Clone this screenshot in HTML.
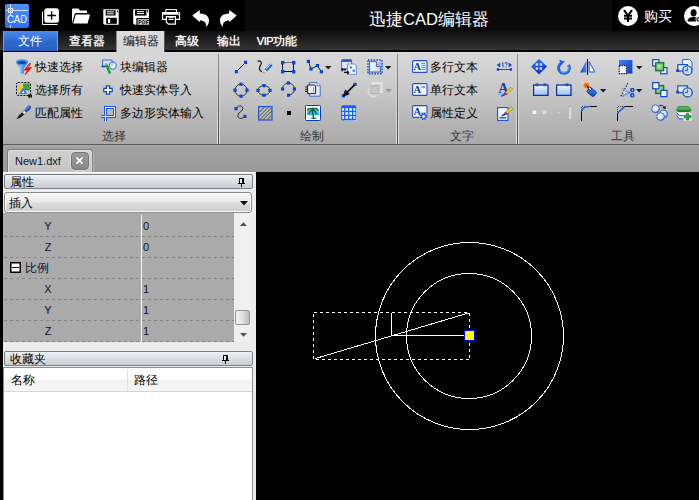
<!DOCTYPE html>
<html lang="zh">
<head>
<meta charset="utf-8">
<title>CAD</title>
<style>
*{box-sizing:border-box;margin:0;padding:0}
html,body{width:699px;height:500px;overflow:hidden;background:#000;font-family:"Liberation Sans",sans-serif;}
#app{position:absolute;left:0;top:0;width:699px;height:500px;overflow:hidden;background:#000}
.abs{position:absolute}
/* title bar */
#title{position:absolute;left:0;top:0;width:699px;height:31px;background:#0a0a0a}
#qa{position:absolute;left:0;top:0;width:245px;height:31px;background:#000}
#buy{position:absolute;left:612px;top:0;width:87px;height:31px;background:#000}
#ttl{position:absolute;left:369px;top:9px;width:120px;height:20px;color:#fff;font-size:16.5px;line-height:20px;white-space:nowrap}
/* tab row */
#tabs{position:absolute;left:0;top:31px;width:699px;height:21px;background:linear-gradient(#0e0e0e,#343434);border-bottom:2px solid #000}
.tab{position:absolute;top:0;height:20px;color:#fff;font-size:12px;line-height:20px;text-align:center;white-space:nowrap}
.tsh{text-shadow:0 0 1px #fff}
/* ribbon */
#ribbon{position:absolute;left:0;top:52px;width:699px;height:93px;background:linear-gradient(#d8d8d8 0,#cecece 30%,#a9a9a9 100%);border-bottom:1px solid #5a5a5a}
.rt{position:absolute;margin-left:-1px;font-size:12px;line-height:14px;color:#000;white-space:nowrap}
.gl{position:absolute;font-size:12px;line-height:14px;color:#333;white-space:nowrap}
.sep{position:absolute;top:2px;width:3px;height:90px;background:linear-gradient(rgba(255,255,255,0),rgba(255,255,255,.15) 40%,rgba(255,255,255,.7));}
.sep:after{content:"";position:absolute;left:1px;top:0;width:1px;height:90px;background:linear-gradient(#8e8e8e,#4c4c4c)}
.ic{position:absolute;width:16px;height:16px;overflow:visible}
/* doc tabs */
#doctabs{position:absolute;left:0;top:145px;width:699px;height:27px;background:linear-gradient(#b0b0b0 0,#a2a2a2 2px,#9a9a9a)}
/* left panel */
#left{position:absolute;left:0;top:172px;width:256px;height:328px;background:#ececec;border-left:3px solid #000}
.phead{position:absolute;left:1px;width:249px;height:15px;border:1px solid #7c8088;border-radius:2px;background:linear-gradient(#eef0f4,#c9ccd3);font-size:12px;line-height:15px;color:#000;padding-left:5px}
.pg{margin-top:1px;font-size:11px;line-height:14px;color:#10102a;white-space:nowrap}
#canvas{position:absolute;left:256px;top:172px;width:443px;height:328px;background:#000}
</style>
</head>
<body>
<div id="app">
<div id="title"></div>
<div id="qa"></div>
<div id="buy"></div>
<!-- logo -->
<div class="abs" style="left:5px;top:4px;width:24px;height:24px;border-radius:2px;background:linear-gradient(#4f8ffb,#2f6ff0);overflow:hidden">
<svg class="abs" style="left:0;top:0" width="24" height="24" viewBox="0 0 24 24">
<path d="M5.5 0V11M5.5 21V24M1 6.5H23" stroke="#cfe0ff" stroke-width="1" fill="none"/>
<rect x="3.5" y="4.5" width="4" height="4" fill="none" stroke="#dfeaff" stroke-width="1"/>
<text x="12" y="19" font-family="Liberation Sans, sans-serif" font-size="10.5" fill="#fff" text-anchor="middle" textLength="20" lengthAdjust="spacingAndGlyphs">CAD</text>
</svg></div>
<!-- new -->
<svg class="abs" style="left:41px;top:7px" width="20" height="20" viewBox="0 0 20 20">
<path d="M1.5 4.5V17.5H16.5" stroke="#fff" stroke-width="1" fill="none"/>
<rect x="3.3" y="1.3" width="14.6" height="14.4" rx="2.5" fill="#fff"/>
<path d="M10.6 4.2V12.8M6.3 8.5H14.9" stroke="#000" stroke-width="1.3" fill="none"/>
</svg>
<!-- open -->
<svg class="abs" style="left:71px;top:7px" width="20" height="20" viewBox="0 0 20 20">
<path d="M1 16.5V2.5Q1 1.5 2 1.5H7.5L9 3.5H16V6H5.2Q4 6 3.6 7.2Z" fill="#fff"/>
<path d="M4.8 7.4H19L16.6 16.6H2.2Z" fill="#fff"/>
</svg>
<!-- save -->
<svg class="abs" style="left:103px;top:9px" width="16" height="16" viewBox="0 0 16 16">
<path d="M0.3 0.3H15.7V15.7H1.8L0.3 14.2Z" fill="#fff"/>
<rect x="2.6" y="1.2" width="10" height="5.3" fill="#000"/>
<rect x="3.8" y="2.3" width="7" height="1" fill="#fff"/><rect x="3.8" y="4.3" width="7" height="1" fill="#fff"/>
<rect x="14" y="1.3" width="0.9" height="2" fill="#000"/>
<rect x="3.2" y="8.8" width="10.6" height="6" fill="#000"/>
<rect x="5" y="10" width="2.2" height="4" fill="#fff"/>
</svg>
<!-- save pdf -->
<svg class="abs" style="left:133px;top:9px" width="16" height="16" viewBox="0 0 16 16">
<path d="M0.2 0.2H15.9V15.8H1.8L0.2 14.2Z" fill="#fff"/>
<rect x="2" y="1" width="11.4" height="5.6" fill="#000"/>
<rect x="4" y="2.2" width="7" height="1" fill="#fff"/><rect x="4" y="4.1" width="7" height="1" fill="#fff"/>
<rect x="14.2" y="0.9" width="0.9" height="2.3" fill="#000"/>
<rect x="3.4" y="9" width="12.6" height="7" fill="#000"/>
<rect x="4.6" y="10.2" width="11.4" height="5.6" fill="#d4d4d4"/>
<g transform="translate(5.6 11)" stroke="#222" stroke-width="1" fill="none"><path d="M0.5 4.4V0.5H1.6Q2.7 0.5 2.7 1.5Q2.7 2.5 1.6 2.5H0.5"/><path d="M4.1 0.5V4H5Q6.5 4 6.5 2.25Q6.5 0.5 5 0.5Z"/><path d="M8.1 4.4V0.5H10.2M8.1 2.4H9.8"/></g>
</svg>
<!-- print -->
<svg class="abs" style="left:161px;top:8px" width="20" height="18" viewBox="0 0 20 18">
<rect x="4.8" y="1.6" width="10.6" height="3.4" fill="#000" stroke="#fff" stroke-width="1"/>
<path d="M0.9 3.9H19.1V11.9H15V10.7H17.9V6.7H2.1V10.7H5V11.9H0.9Z" fill="#fff"/>
<rect x="17.1" y="4.6" width="1.1" height="1.1" fill="#000"/>
<path d="M5.4 8.6H14.4V16.2H7.4L5.4 14.2Z" fill="#000" stroke="#fff" stroke-width="1.2"/>
<path d="M7.6 9.7H12.6M7.6 11.5H12.6" stroke="#fff" stroke-width="1"/>
</svg>
<!-- undo -->
<svg class="abs" style="left:192px;top:9px" width="18" height="19" viewBox="0 0 18 19">
<path d="M0.3 6.6L7.8 1V4.6C14.5 4.6 17.3 8.2 17 12.2C16.8 14.8 15.2 16.8 13.8 18C14.5 15.5 14.2 12 7.8 11.2V13.2Z" fill="#fff"/>
</svg>
<!-- redo -->
<svg class="abs" style="left:219px;top:9px" width="18" height="19" viewBox="0 0 18 19">
<path transform="translate(18,0) scale(-1,1)" d="M0.3 6.6L7.8 1V4.6C14.5 4.6 17.3 8.2 17 12.2C16.8 14.8 15.2 16.8 13.8 18C14.5 15.5 14.2 12 7.8 11.2V13.2Z" fill="#fff"/>
</svg>
<!-- buy -->
<svg class="abs" style="left:618px;top:6px" width="20" height="20" viewBox="0 0 20 20">
<circle cx="10" cy="10" r="10" fill="#fff"/>
<path d="M6 4.2L10 9.6L14 4.2M10 9.6V16M6 9.8H14M6 12.6H14" stroke="#000" stroke-width="2" fill="none"/>
</svg>
<div class="abs" style="left:644px;top:7px;width:30px;height:18px;color:#fff;font-size:14px;line-height:18px;white-space:nowrap">购买</div>
<svg class="abs" style="left:684px;top:6px" width="20" height="20" viewBox="0 0 20 20">
<circle cx="10" cy="10" r="10" fill="#fff"/>
<ellipse cx="9.6" cy="6.8" rx="3" ry="3.6" fill="#000"/>
<path d="M3.6 15.6C3.6 12.4 6 11 9.6 11C13 11 15.4 12.4 15.4 15.6Z" fill="#000"/>
<circle cx="14.2" cy="13.4" r="2.6" fill="#fff"/><circle cx="14.4" cy="13.4" r="1.5" fill="none" stroke="#000" stroke-width="1.1"/>
</svg>
<div id="ttl">迅捷CAD编辑器</div>
<div id="tabs">
<div class="abs" style="left:3px;top:0;width:55px;height:20px;background:linear-gradient(#4a8af0,#2f68cc 55%,#2a5fc0);border-left:1px solid #6aa2ff;border-right:1px solid #6aa2ff"></div>
<div class="tab" style="left:3px;width:54px;font-size:12px">文件</div>
<div class="tab tsh" style="left:60px;width:54px">查看器</div>
<div class="abs" style="left:116px;top:0;width:49px;height:21px;background:linear-gradient(#dcdcdc,#d6d6d6);border-left:1px solid #888;border-right:1px solid #555"></div>
<div class="tab" style="left:116px;width:49px;color:#111">编辑器</div>
<div class="tab tsh" style="left:167px;width:40px">高级</div>
<div class="tab tsh" style="left:208.5px;width:40px">输出</div>
<div class="tab tsh" style="left:252px;width:50px"><span style="font-size:11px;letter-spacing:-0.4px">VIP</span>功能</div>
</div>
<div id="ribbon">
<!-- group separators -->
<div class="abs" style="left:0;top:0;width:3px;height:93px;background:#000"></div>
<div class="sep" style="left:217px"></div>
<div class="sep" style="left:396px"></div>
<div class="sep" style="left:516px"></div>
<!-- ===== select group (coords relative to ribbon: y-52) ===== -->
<svg class="abs" style="left:16px;top:7px" width="17" height="17" viewBox="0 0 17 17">
<defs><linearGradient id="gfun" x1="0" x2="1"><stop offset="0" stop-color="#4f9cf0"/><stop offset="0.35" stop-color="#7fc0ff"/><stop offset="1" stop-color="#1450b8"/></linearGradient></defs>
<path d="M0.3 3.6L4 9.2V14.2Q6 15.8 8 14.2V9.2L11.7 3.6Z" fill="url(#gfun)"/>
<ellipse cx="6" cy="3.3" rx="6" ry="3.1" fill="#3f8ee8"/>
<ellipse cx="6" cy="3.5" rx="4.3" ry="1.6" fill="#0c48b4"/>
<path d="M13.6 4L15.2 4.6L12.6 8.2H16.2L9.4 16L8.6 15.4L11 11.4H7.4Z" fill="#e0101c"/>
<path d="M11.4 8.6L13 6.8" stroke="#ff7a7a" stroke-width="1" fill="none"/>
</svg>
<svg class="abs" style="left:16px;top:30px" width="17" height="16" viewBox="0 0 17 16">
<rect x="0.5" y="0.5" width="14" height="13" rx="1.5" fill="none" stroke="#111" stroke-width="1" stroke-dasharray="2 1.2"/>
<rect x="7.6" y="2" width="5.6" height="6" fill="#35a83f" stroke="#1f7c2a" stroke-width="0.6"/>
<circle cx="5" cy="6.2" r="2.7" fill="#f6c619"/>
<path d="M3 12L7.2 5.6L11.4 12Z" fill="#2e78e0"/>
<path d="M5.8 11L7.2 8.4L8.6 11Z" fill="#fff"/>
<path d="M12 12.4H16V16.2L14.6 14.8L13.2 16.2L12 15Z" fill="#111"/>
</svg>
<svg class="abs" style="left:16px;top:53px" width="16" height="15" viewBox="0 0 16 15">
<path d="M11 1.8L13.4 0.2L15.4 2L14 4.6L10.4 7.6L8.2 5.4Z" fill="#1f4cb8"/>
<path d="M11.6 2L13.2 1L14 1.8L10 5.4L9.2 4.6Z" fill="#4f84ee"/>
<path d="M8.2 5.4L10.4 7.6L8.2 9.6L6 7.4Z" fill="#dfe4ea" stroke="#555" stroke-width="0.5"/>
<path d="M6 7.4L8.2 9.6L4.6 12.6L0.4 14.2L2.8 10.4Z" fill="#1a1a1a"/>
</svg>
<div class="rt" style="left:36px;top:8px">快速选择</div>
<div class="rt" style="left:36px;top:31px">选择所有</div>
<div class="rt" style="left:36px;top:54px">匹配属性</div>
<!-- col 2 -->
<svg class="abs" style="left:101px;top:7px" width="17" height="16" viewBox="0 0 17 16">
<path d="M1.6 7.6V1H10.2L12.4 3.2V7.6Z" fill="#dde0fa" stroke="#3a70d4" stroke-width="1.1"/>
<rect x="0.4" y="6.6" width="3.8" height="1.5" fill="#0c48b4"/>
<circle cx="11.8" cy="6.6" r="3.5" fill="#fdfdff" stroke="#4a86dc" stroke-width="1.3"/>
<path d="M9.4 6.2A2.4 2.4 0 0 1 13 4.6L11.8 6.6Z" fill="#a8c0ea"/>
<path d="M4.8 4.4L9 14.4" stroke="#18a048" stroke-width="2.5" fill="none"/>
<path d="M4.7 4.2L5.3 5.6" stroke="#b8dc60" stroke-width="2.2" fill="none"/>
</svg>
<svg class="abs" style="left:103px;top:33px" width="10" height="10" viewBox="0 0 10 10">
<path d="M3.4 0.8H6.6V3.4H9.2V6.6H6.6V9.2H3.4V6.6H0.8V3.4H3.4Z" fill="#f4f8ff" stroke="#0e44c4" stroke-width="1.25"/>
</svg>
<svg class="abs" style="left:101px;top:54px" width="16" height="16" viewBox="0 0 16 16" shape-rendering="crispEdges">
<path d="M3 1.5H15M13.5 0V12M0 10.5H15M4.5 0V15" stroke="#1a55e0" stroke-width="3" fill="none"/>
<path d="M4 1.5H14M13.5 1V11M0 10.5H14M4.5 1V15" stroke="#e8f0ff" stroke-width="1" fill="none"/>
</svg>
<div class="rt" style="left:121px;top:8px">块编辑器</div>
<div class="rt" style="left:121px;top:31px">快速实体导入</div>
<div class="rt" style="left:121px;top:54px">多边形实体输入</div>
<div class="gl" style="left:102px;top:77px">选择</div>
<!-- ===== draw group ===== -->
<!-- line -->
<svg class="abs" style="left:234px;top:8px" width="14" height="14" viewBox="0 0 14 14">
<path d="M2.5 11.5L11.5 2.5" stroke="#222" stroke-width="1"/>
<rect x="0.8" y="10" width="3.2" height="3.2" fill="#0845d8"/><rect x="10" y="0.8" width="3.2" height="3.2" fill="#0845d8"/>
</svg>
<!-- freehand -->
<svg class="abs" style="left:257px;top:8px" width="16" height="14" viewBox="0 0 16 14">
<path d="M0.5 1.2C4 0 5.2 3 3.4 5.4C1.8 7.8 2.2 10.6 4.8 11.6" stroke="#111" stroke-width="1.2" fill="none"/>
<path d="M7.6 9.2L13.2 3.4L15.6 5.6L9.8 11.6Z" fill="#1058e0"/>
<path d="M8.6 8.6L13.2 3.8L14 4.6L9.4 9.4Z" fill="#a8d0ff"/>
<path d="M7.6 9.2L9.8 11.6L6.4 12.8Z" fill="#f0e4d8"/>
<path d="M7 11.4L8 12.3L6 13Z" fill="#e02020"/>
</svg>
<!-- rect -->
<svg class="abs" style="left:281px;top:8px" width="16" height="14" viewBox="0 0 16 14">
<path d="M1.5 2.5H12.5" stroke="#777" stroke-width="1" shape-rendering="crispEdges"/>
<path d="M1.5 2.5V11.5H12.5V2.5" fill="none" stroke="#111" stroke-width="1" shape-rendering="crispEdges"/>
<rect x="0" y="1" width="3.4" height="3.4" fill="#0845d8"/><rect x="11" y="1" width="3.4" height="3.4" fill="#0845d8"/>
<rect x="0" y="10" width="3.4" height="3.4" fill="#0845d8"/><rect x="11" y="10" width="3.4" height="3.4" fill="#0845d8"/>
</svg>
<!-- polyline -->
<svg class="abs" style="left:306px;top:7px" width="18" height="15" viewBox="0 0 18 15">
<path d="M2.4 2.4L5 10L11.4 6.6L15.4 12.8" stroke="#222" stroke-width="1" fill="none"/>
<rect x="0.8" y="0.8" width="3.2" height="3.2" fill="#0845d8"/><rect x="3.4" y="8.4" width="3.2" height="3.2" fill="#0845d8"/>
<rect x="9.8" y="5" width="3.2" height="3.2" fill="#0845d8"/><rect x="13.8" y="11.2" width="3.2" height="3.2" fill="#0845d8"/>
</svg>
<svg class="abs" style="left:325px;top:14px" width="7" height="4" viewBox="0 0 7 4"><path d="M0 0H6.4L3.2 3.4Z" fill="#1a1a1a"/></svg>
<!-- insert block -->
<svg class="abs" style="left:341px;top:7px" width="16" height="16" viewBox="0 0 16 16">
<rect x="0.6" y="0.6" width="10" height="9" rx="1" fill="#dfeafc" stroke="#2a62d0" stroke-width="0.9"/>
<rect x="0.6" y="0.6" width="10" height="2.4" fill="#1f5fe0"/>
<rect x="7.8" y="1" width="1.6" height="1.4" fill="#e03030"/>
<path d="M6.4 5H13.4L15.4 7V15.4H6.4Z" fill="#f2f6fc" stroke="#5a8ad8" stroke-width="0.9"/>
<rect x="8.8" y="7.4" width="2" height="2" fill="#2f6fe0"/><rect x="11.6" y="10.6" width="2.2" height="2.2" fill="#2f6fe0"/>
<path d="M1 10.6H5M1.6 9L0.4 10.6L1.6 12.2M3 13.4H7.6M6.2 11.8L7.8 13.4L6.2 15" stroke="#111" stroke-width="1.1" fill="none"/>
</svg>
<!-- boundary -->
<svg class="abs" style="left:367px;top:7px" width="16" height="16" viewBox="0 0 16 16">
<defs><linearGradient id="gbd" x1="0" y1="0" x2="1" y2="1"><stop offset="0" stop-color="#ffffff"/><stop offset="1" stop-color="#c4d8f6"/></linearGradient></defs>
<rect x="1" y="1" width="14" height="13.6" fill="none" stroke="#1d55d0" stroke-width="1.6" stroke-dasharray="1.6 1.2"/>
<path d="M2.6 2.6H9.4V7.4H13.4V13H2.6Z" fill="url(#gbd)" stroke="#1d55d0" stroke-width="0.9"/>
<path d="M10.4 6L13.6 2.8M12 6.6L14.4 4.2" stroke="#4b86e8" stroke-width="0.8"/>
</svg>
<svg class="abs" style="left:385px;top:14px" width="7" height="4" viewBox="0 0 7 4"><path d="M0 0H6.4L3.2 3.4Z" fill="#1a1a1a"/></svg>
<!-- circle -->
<svg class="abs" style="left:233px;top:30px" width="16" height="16" viewBox="0 0 16 16">
<circle cx="8" cy="8.2" r="6" fill="none" stroke="#333" stroke-width="1"/>
<rect x="6.4" y="0.6" width="3.2" height="3.2" fill="#0845d8"/><rect x="6.4" y="12.6" width="3.2" height="3.2" fill="#0845d8"/>
<rect x="0.4" y="6.6" width="3.2" height="3.2" fill="#0845d8"/><rect x="12.4" y="6.6" width="3.2" height="3.2" fill="#0845d8"/>
</svg>
<!-- ellipse -->
<svg class="abs" style="left:256px;top:30px" width="16" height="16" viewBox="0 0 16 16">
<ellipse cx="8" cy="8.4" rx="6" ry="4.8" fill="none" stroke="#333" stroke-width="1"/>
<rect x="6.4" y="2" width="3.2" height="3.2" fill="#0845d8"/><rect x="6.4" y="11.6" width="3.2" height="3.2" fill="#0845d8"/>
<rect x="0.4" y="6.8" width="3.2" height="3.2" fill="#0845d8"/><rect x="12.4" y="6.8" width="3.2" height="3.2" fill="#0845d8"/>
</svg>
<!-- arc -->
<svg class="abs" style="left:280px;top:29px" width="16" height="16" viewBox="0 0 16 16">
<path d="M2.6 8C2.6 4 6 2 8.4 2C12 2 14.4 5 14.4 8C14.4 11 12 14 8.6 14.2" fill="none" stroke="#333" stroke-width="1"/>
<rect x="6.8" y="0.4" width="3.2" height="3.2" fill="#0845d8"/><rect x="1" y="6.4" width="3.2" height="3.2" fill="#0845d8"/>
<rect x="12.8" y="6.4" width="3.2" height="3.2" fill="#0845d8"/><rect x="7" y="12.6" width="3.2" height="3.2" fill="#0845d8"/>
</svg>
<!-- paste-like -->
<svg class="abs" style="left:305px;top:30px" width="16" height="15" viewBox="0 0 16 15">
<path d="M4.6 0.6H12L15.2 3.6V14.2H4.6Z" fill="#dfe9fb" stroke="#2c62cc" stroke-width="0.9"/>
<path d="M12 0.6V3.6H15.2" fill="#fff" stroke="#2c62cc" stroke-width="0.7"/>
<path d="M2.6 3H9.6L10.6 4V11.6H2.6Z" fill="#ebebeb" stroke="#222" stroke-width="1"/>
<path d="M0 5H3M0 7.2H3M0 9.4H3" stroke="#222" stroke-width="1.1"/>
<path d="M8.6 5.2V10.4" stroke="#999" stroke-width="1"/>
</svg>
<!-- leader arrow -->
<svg class="abs" style="left:341px;top:30px" width="16" height="16" viewBox="0 0 16 16">
<rect x="12.4" y="0.8" width="3.2" height="3.2" fill="#0845d8"/><rect x="0.8" y="12.2" width="3.2" height="3.2" fill="#0845d8"/>
<path d="M13.6 2.8L5 11.4" stroke="#111" stroke-width="1.8"/>
<path d="M1.6 14.8L4.2 7.6L8.8 12.2Z" fill="#111"/>
</svg>
<!-- disabled -->
<svg class="abs" style="left:367px;top:30px" width="16" height="16" viewBox="0 0 16 16">
<rect x="5.4" y="0.8" width="9.6" height="9.6" fill="#d9d9d9" stroke="#e9e9e9" stroke-width="1.2"/>
<circle cx="6.4" cy="9.6" r="5.4" fill="#cfcfcf" stroke="#e2e2e2" stroke-width="1"/>
<rect x="4" y="3.4" width="8" height="8" fill="#c6c6c6" stroke="#b0b0b0" stroke-width="0.8"/>
</svg>
<svg class="abs" style="left:385px;top:37px" width="7" height="4" viewBox="0 0 7 4"><path d="M0 0H7L3.5 3.6Z" fill="#9a9a9a"/></svg>
<!-- spline -->
<svg class="abs" style="left:234px;top:52px" width="14" height="17" viewBox="0 0 14 17">
<path d="M2.4 4.8C3 1.4 8.6 0.8 8.8 4.4C9 7.6 3.6 8.2 3.8 11.8C4 15 8.6 15.4 10.6 12.6" fill="none" stroke="#222" stroke-width="1"/>
<rect x="0.4" y="3" width="3.2" height="3.2" fill="#0845d8"/><rect x="9.4" y="10.8" width="3.2" height="3.2" fill="#0845d8"/>
</svg>
<!-- hatch -->
<svg class="abs" style="left:258px;top:54px" width="15" height="15" viewBox="0 0 15 15">
<rect x="0.6" y="0.6" width="13.4" height="13.4" fill="#b9b9b9" stroke="#1b52cc" stroke-width="1.2"/>
<path d="M1.2 6.4L6.4 1.2M1.2 10.4L10.4 1.2M1.4 14L13.4 2M5.2 13.6L13.4 5.4M9.2 13.6L13.4 9.4" stroke="#444" stroke-width="0.9"/>
</svg>
<!-- point -->
<div class="abs" style="left:287px;top:59px;width:4px;height:4px;background:#050505"></div>
<!-- image -->
<svg class="abs" style="left:305px;top:53px" width="16" height="16" viewBox="0 0 16 16">
<defs><linearGradient id="gim" x1="0" y1="0" x2="0" y2="1"><stop offset="0" stop-color="#eef6ff"/><stop offset="0.35" stop-color="#7cccf8"/><stop offset="0.66" stop-color="#22a4ec"/><stop offset="0.67" stop-color="#eaf4ff"/><stop offset="1" stop-color="#dcecff"/></linearGradient></defs>
<rect x="0.5" y="0.5" width="15" height="15" rx="0.8" fill="#fff" stroke="#1038b0" stroke-width="1"/>
<rect x="1.8" y="1.8" width="12.4" height="12.4" fill="url(#gim)"/>
<path d="M7.6 5.6C7.2 8 8.4 10 8.6 13" stroke="#0a6a3a" stroke-width="1.5" fill="none"/>
<path d="M7.8 5C6.2 2.8 4 3 2.8 5M7.8 5C9.6 2.8 11.8 3 12.8 5.2M7.8 5.2C6 5.2 4.6 6.4 4.4 8M7.8 5.2C9.6 5.2 10.8 6.4 11 8.2M7.8 5.4V3.2" stroke="#0a6a3a" stroke-width="1.5" fill="none" stroke-linecap="round"/>
<path d="M6.4 13.4H11" stroke="#0a6a3a" stroke-width="1.1"/>
</svg>
<!-- table -->
<svg class="abs" style="left:341px;top:53px" width="16" height="16" viewBox="0 0 16 16">
<rect x="0.2" y="0.2" width="15.2" height="15.2" rx="1.8" fill="#1260ff"/>
<g fill="#dfeaff"><rect x="1.1" y="3.1" width="2" height="2.7"/><rect x="4.4" y="3.1" width="2.7" height="2.7"/><rect x="8.3" y="3.1" width="2.7" height="2.7"/><rect x="12.2" y="3.1" width="2.2" height="2.7"/><rect x="1.1" y="7.1" width="2" height="2.7"/><rect x="4.4" y="7.1" width="2.7" height="2.7"/><rect x="8.3" y="7.1" width="2.7" height="2.7"/><rect x="12.2" y="7.1" width="2.2" height="2.7"/><rect x="1.1" y="11.1" width="2" height="2.7"/><rect x="4.4" y="11.1" width="2.7" height="2.7"/><rect x="8.3" y="11.1" width="2.7" height="2.7"/><rect x="12.2" y="11.1" width="2.2" height="2.7"/></g>
<path d="M15.9 3V15.8H3" stroke="#e8e8e8" stroke-width="0.6" fill="none"/>
</svg>
<div class="gl" style="left:300px;top:77px">绘制</div>
<!-- ===== text group ===== -->
<svg class="abs" style="left:412px;top:8px" width="16" height="13" viewBox="0 0 16 13">
<rect x="0.6" y="0.6" width="14.4" height="11.8" rx="1" fill="#f2f7ff" stroke="#1b52cc" stroke-width="1.1"/>
<text x="5.2" y="10.2" font-family="Liberation Serif, serif" font-weight="bold" font-size="10.5" fill="#0f38a8" text-anchor="middle">A</text>
<path d="M9.4 3.4H13.4M9.4 5.4H13.4M9.4 7.4H13.4M9.4 9.4H13.4" stroke="#3a6fd8" stroke-width="0.9"/>
</svg>
<svg class="abs" style="left:412px;top:31px" width="16" height="13" viewBox="0 0 16 13">
<rect x="0.6" y="0.6" width="14.4" height="11.8" rx="1" fill="#f2f7ff" stroke="#1b52cc" stroke-width="1.1"/>
<text x="5.2" y="10.2" font-family="Liberation Serif, serif" font-weight="bold" font-size="10.5" fill="#0f38a8" text-anchor="middle">A</text>
<path d="M9.4 4H13.4" stroke="#3a6fd8" stroke-width="1.2"/>
</svg>
<svg class="abs" style="left:412px;top:53px" width="17" height="16" viewBox="0 0 17 16">
<rect x="0.6" y="0.6" width="14.4" height="11.8" rx="1" fill="#f2f7ff" stroke="#1b52cc" stroke-width="1.1"/>
<text x="5.2" y="10.2" font-family="Liberation Serif, serif" font-weight="bold" font-size="10.5" fill="#0f38a8" text-anchor="middle">A</text>
<circle cx="11.6" cy="11.4" r="4.4" fill="#c4c4c4"/>
<circle cx="11.6" cy="11.4" r="2.6" fill="none" stroke="#1b52cc" stroke-width="2.2" stroke-dasharray="1.3 0.75"/>
<circle cx="11.6" cy="11.4" r="2" fill="#e8f0ff" stroke="#1b52cc" stroke-width="1"/>
</svg>
<div class="rt" style="left:431px;top:8px">多行文本</div>
<div class="rt" style="left:431px;top:31px">单行文本</div>
<div class="rt" style="left:431px;top:54px">属性定义</div>
<!-- dimension -->
<svg class="abs" style="left:496px;top:10px" width="17" height="10" viewBox="0 0 17 10">
<path d="M0.8 3L4.2 0.6V5.4ZM16 3L12.6 0.6V5.4Z" fill="#1546c8"/>
<path d="M1.6 7.5H15.2" stroke="#1546c8" stroke-width="1" fill="none"/>
<rect x="0.8" y="6.2" width="2.2" height="2.6" fill="#1546c8"/><rect x="13.8" y="6.2" width="2.2" height="2.6" fill="#1546c8"/>
<path d="M6 1.4L6.9 0.8V5M9 1.6Q9 0.6 10.1 0.6Q11.2 0.6 11.2 1.6Q11.2 2.4 10.1 3.2M10.1 4.4V5.2" stroke="#1546c8" stroke-width="1" fill="none"/>
</svg>
<!-- text style -->
<svg class="abs" style="left:497px;top:30px" width="17" height="16" viewBox="0 0 17 16">
<text x="6.2" y="11.2" font-family="Liberation Serif, serif" font-weight="bold" font-size="14" fill="#1040b8" text-anchor="middle">A</text>
<path d="M0.8 12.6H9" stroke="#8ab0ee" stroke-width="1"/>
<path d="M7.6 11L13.8 5.2L15.6 7L9.4 12.8Z" fill="#f4d020" stroke="#6a5a20" stroke-width="0.5"/>
<path d="M7.6 11L9.4 12.8L4.6 14.8L3.8 14Z" fill="#1c4ab8"/>
<path d="M7.6 11L8.5 10.2L10.3 12L9.4 12.8Z" fill="#d02020"/>
</svg>
<!-- edit -->
<svg class="abs" style="left:497px;top:53px" width="17" height="16" viewBox="0 0 17 16">
<rect x="0.6" y="2.6" width="10.4" height="12.8" fill="#f2f6ff" stroke="#1b52cc" stroke-width="1.1"/>
<path d="M2.4 12.8H9.2" stroke="#1b52cc" stroke-width="1.4"/>
<path d="M8 7.6L14.2 1.8L16 3.6L9.8 9.4Z" fill="#f4d020" stroke="#6a5a20" stroke-width="0.5"/>
<path d="M8 7.6L9.8 9.4L5 11.6L4.2 10.8Z" fill="#1c4ab8"/>
<path d="M8 7.6L8.9 6.8L10.7 8.6L9.8 9.4Z" fill="#d02020"/>
</svg>
<div class="gl" style="left:450px;top:77px">文字</div>
<!-- ===== tools group ===== -->
<!-- move -->
<svg class="abs" style="left:531px;top:7px" width="16" height="16" viewBox="0 0 16 16">
<defs><linearGradient id="gmv" x1="0" y1="0" x2="0.6" y2="1"><stop offset="0" stop-color="#2e74ff"/><stop offset="1" stop-color="#0832c0"/></linearGradient></defs>
<path d="M8 0L16 7.6L8 15.4L0 7.6Z" fill="url(#gmv)"/>
<g fill="#cfcfcf"><rect x="4.6" y="4.2" width="2.6" height="2.6"/><rect x="8.6" y="4.2" width="2.6" height="2.6"/><rect x="4.6" y="8.2" width="2.6" height="2.6"/><rect x="8.6" y="8.2" width="2.6" height="2.6"/></g>
</svg>
<!-- rotate -->
<svg class="abs" style="left:556px;top:7px" width="16" height="16" viewBox="0 0 16 16">
<path d="M12.4 5.8A5.4 5.4 0 1 1 5.4 4.2" fill="none" stroke="#1e62e6" stroke-width="2.9"/>
<path d="M12.6 7.4A4.9 4.9 0 0 1 4 11.6" fill="none" stroke="#7cbcff" stroke-width="0.9"/>
<path d="M3.4 0.8L9 2.6L4.4 6.4Z" fill="#1e62e6"/>
</svg>
<!-- mirror -->
<svg class="abs" style="left:580px;top:7px" width="16" height="17" viewBox="0 0 16 17">
<defs><linearGradient id="gmr" x1="0" y1="0" x2="1" y2="0"><stop offset="0" stop-color="#0a3cc4"/><stop offset="1" stop-color="#4a8cff"/></linearGradient></defs>
<path d="M6.4 1.6V13.4H0.2Z" fill="url(#gmr)"/>
<path d="M9.2 2.6V13H14.8Z" fill="#f0f4fc" stroke="#1c5ce0" stroke-width="1"/>
<path d="M7.5 0V16.2" stroke="#111" stroke-width="1" shape-rendering="crispEdges"/>
</svg>
<!-- scale -->
<svg class="abs" style="left:618px;top:8px" width="15" height="15" viewBox="0 0 15 15">
<defs><linearGradient id="gsc" x1="0" y1="0" x2="1" y2="1"><stop offset="0" stop-color="#3b80ff"/><stop offset="1" stop-color="#0a3cb8"/></linearGradient></defs>
<rect x="1" y="0" width="13.4" height="13.6" fill="url(#gsc)"/>
<rect x="1.2" y="5.6" width="7.2" height="8" fill="#eef4ff" stroke="#111" stroke-width="1.2" stroke-dasharray="1.2 1.2"/>
</svg>
<svg class="abs" style="left:636px;top:14px" width="7" height="4" viewBox="0 0 7 4"><path d="M0 0H6.4L3.2 3.4Z" fill="#1a1a1a"/></svg>
<!-- bring front -->
<svg class="abs" style="left:652px;top:7px" width="17" height="16" viewBox="0 0 17 16">
<defs><radialGradient id="ggn" cx="0.45" cy="0.45" r="0.7"><stop offset="0" stop-color="#b4ecb0"/><stop offset="1" stop-color="#3fb048"/></radialGradient></defs>
<rect x="0.7" y="0.7" width="6.2" height="6.2" fill="#eef4ff" stroke="#1546b8" stroke-width="1.2"/>
<rect x="8.8" y="8.6" width="6.2" height="6.2" fill="#eef4ff" stroke="#1546b8" stroke-width="1.2"/>
<rect x="3.7" y="3.7" width="8" height="8" fill="url(#ggn)" stroke="#176a22" stroke-width="1.2"/>
</svg>
<!-- icon 6 row1 -->
<svg class="abs" style="left:676px;top:7px" width="17" height="17" viewBox="0 0 17 17">
<path d="M6.6 0.6H13.6L16 3V11H6.6Z" fill="#eef4ff" stroke="#2a62d0" stroke-width="1"/>
<rect x="1.8" y="5.6" width="9.6" height="6.4" fill="#dce8fb" stroke="#1b52cc" stroke-width="1.2"/>
<rect x="0.2" y="10.4" width="3" height="2.6" fill="#1546b8"/>
<circle cx="11.4" cy="11.4" r="4.6" fill="#c9dcf8" stroke="#1b52cc" stroke-width="1.3"/>
<path d="M11.4 8.6V11.6H8.8" stroke="#1b52cc" stroke-width="1" fill="none"/>
</svg>
<!-- row 2 boxes -->
<svg class="abs" style="left:533px;top:31px" width="16" height="13" viewBox="0 0 16 13">
<defs><linearGradient id="gbx" x1="0" y1="0" x2="0" y2="1"><stop offset="0" stop-color="#f4f8ff"/><stop offset="1" stop-color="#9cbef6"/></linearGradient></defs>
<rect x="0.6" y="2" width="14.4" height="10.4" fill="url(#gbx)" stroke="#0a30a8" stroke-width="1.3"/>
<rect x="2.6" y="0.4" width="2.8" height="2.8" fill="#1b52cc"/><rect x="10.4" y="0.4" width="2.8" height="2.8" fill="#1b52cc"/>
</svg>
<svg class="abs" style="left:556px;top:31px" width="16" height="13" viewBox="0 0 16 13">
<rect x="0.6" y="2" width="14.4" height="10.4" fill="url(#gbx)" stroke="#0a30a8" stroke-width="1.3"/>
<rect x="9.6" y="0.4" width="2.8" height="2.8" fill="#1b52cc"/>
</svg>
<!-- explode -->
<svg class="abs" style="left:582px;top:29px" width="16" height="17" viewBox="0 0 16 17">
<defs><radialGradient id="gex"><stop offset="0" stop-color="#f02810"/><stop offset="0.55" stop-color="#f58a28"/><stop offset="1" stop-color="#fae6a0" stop-opacity="0.5"/></radialGradient>
<linearGradient id="gdy" x1="0" y1="0" x2="1" y2="1"><stop offset="0" stop-color="#4a98ff"/><stop offset="1" stop-color="#0a3cb8"/></linearGradient></defs>
<circle cx="4.4" cy="4.4" r="4.3" fill="url(#gex)"/>
<path d="M5 5.6C7 5.4 5.4 7.8 7.6 7.6" stroke="#111" stroke-width="1.2" fill="none"/>
<rect x="5.4" y="8" width="8.6" height="6" rx="1.4" transform="rotate(38 9.6 11)" fill="url(#gdy)" stroke="#0a3098" stroke-width="0.8"/>
<rect x="6.2" y="6.6" width="3.4" height="2.2" transform="rotate(38 7.8 7.8)" fill="#f0f4ff" stroke="#111" stroke-width="0.8"/>
</svg>
<svg class="abs" style="left:600px;top:37px" width="7" height="4" viewBox="0 0 7 4"><path d="M0 0H6.4L3.2 3.4Z" fill="#1a1a1a"/></svg>
<!-- trim -->
<svg class="abs" style="left:619px;top:30px" width="16" height="17" viewBox="0 0 16 17">
<path d="M8.8 1.2L1.2 15.4" stroke="#1a1a1a" stroke-width="1.2" stroke-dasharray="1.2 1.5"/>
<path d="M3.2 6L11.4 10.2V11L3.2 15.2L5 10.6Z" fill="#dce6fc"/>
<path d="M3.2 6L11.4 10.2V11L3.2 15.2L4 12.8L8.4 10.6L4 8.4Z" fill="#2a62d8"/>
<path d="M4.4 7.4L9.6 10.2M4.4 13.8L9.6 11" stroke="#dfeaff" stroke-width="0.8"/>
<rect x="11.2" y="6" width="4.2" height="4.2" rx="1.4" fill="#0c44c4"/>
<rect x="11.2" y="11.2" width="4.2" height="4.2" rx="1.4" fill="#0c44c4"/>
<rect x="12.8" y="7" width="1.1" height="2.2" rx="0.5" fill="#a8c8ff"/>
<rect x="12.8" y="12.2" width="1.1" height="2.2" rx="0.5" fill="#a8c8ff"/>
</svg>
<svg class="abs" style="left:636px;top:37px" width="7" height="4" viewBox="0 0 7 4"><path d="M0 0H6.4L3.2 3.4Z" fill="#1a1a1a"/></svg>
<!-- send back -->
<svg class="abs" style="left:652px;top:30px" width="17" height="16" viewBox="0 0 17 16">
<rect x="3.7" y="3.5" width="8" height="8" fill="url(#ggn)" stroke="#176a22" stroke-width="1.2"/>
<rect x="0.7" y="0.6" width="6.2" height="6.2" fill="#eef4ff" stroke="#1546b8" stroke-width="1.2"/>
<rect x="8.8" y="8.4" width="6.2" height="6.2" fill="#eef4ff" stroke="#1546b8" stroke-width="1.2"/>
</svg>
<!-- icon 6 row2 -->
<svg class="abs" style="left:676px;top:33px" width="17" height="13" viewBox="0 0 17 13">
<rect x="1.8" y="0.8" width="9.6" height="6.8" fill="#dce8fb" stroke="#1b52cc" stroke-width="1.2"/>
<rect x="0.2" y="5.8" width="3" height="2.6" fill="#1546b8"/>
<circle cx="11.6" cy="7.4" r="4.6" fill="#c9dcf8" stroke="#1b52cc" stroke-width="1.3"/>
<path d="M11.6 4.6V7.6H9" stroke="#1b52cc" stroke-width="1" fill="none"/>
</svg>
<!-- row 3 -->
<svg class="abs" style="left:532px;top:58px" width="16" height="5" viewBox="0 0 16 5">
<rect x="0.6" y="0.6" width="3.6" height="3.4" fill="#f4f4f4"/><rect x="10.6" y="0.6" width="3.6" height="3.4" fill="#dcdcdc"/>
<path d="M5.4 1H9.6M5.4 3.6H9.6" stroke="#cfcfcf" stroke-width="0.8" stroke-dasharray="1 1"/>
</svg>
<svg class="abs" style="left:556px;top:54px" width="16" height="14" viewBox="0 0 16 14">
<defs><linearGradient id="ggr" x1="0" x2="1"><stop offset="0" stop-color="#c2c2c2"/><stop offset="1" stop-color="#ededed"/></linearGradient></defs>
<rect x="12.2" y="0.4" width="3.4" height="13" fill="url(#ggr)" stroke="#b2b2b2" stroke-width="0.7"/>
<rect x="0.4" y="5" width="4.8" height="3.6" fill="#c6c6c6" stroke="#adadad" stroke-width="0.8"/>
<path d="M6 5.4H11.6M6 8.2H11.6" stroke="#b4b4b4" stroke-width="0.8" stroke-dasharray="1 1"/>
</svg>
<!-- fillet -->
<svg class="abs" style="left:580px;top:53px" width="17" height="16" viewBox="0 0 17 16">
<path d="M1.5 1.5H9M1.5 1.5V6" stroke="#444" stroke-width="1" stroke-dasharray="1 1" fill="none" shape-rendering="crispEdges"/>
<path d="M1.5 6.5V15.5M9.5 1.5H16.5" stroke="#0a0a0a" stroke-width="1" fill="none" shape-rendering="crispEdges"/>
<path d="M1.6 7C1.6 3.6 4.6 1.7 9.6 1.6" stroke="#1c5ce0" stroke-width="1.5" fill="none"/>
</svg>
<!-- chamfer -->
<svg class="abs" style="left:616px;top:53px" width="17" height="16" viewBox="0 0 17 16">
<path d="M1.5 1.5H8.5M1.5 1.5V7" stroke="#444" stroke-width="1" stroke-dasharray="1 1" fill="none" shape-rendering="crispEdges"/>
<path d="M1.5 7.5V15.5M8.5 1.5H16.5" stroke="#0a0a0a" stroke-width="1" fill="none" shape-rendering="crispEdges"/>
<path d="M1.6 8L8.6 1.6" stroke="#1c5ce0" stroke-width="1.5" fill="none"/>
</svg>
<!-- spheres -->
<svg class="abs" style="left:651px;top:52px" width="18" height="17" viewBox="0 0 18 17">
<defs><radialGradient id="gsp" cx="0.4" cy="0.35" r="0.7"><stop offset="0" stop-color="#ffffff"/><stop offset="0.6" stop-color="#d0e2fb"/><stop offset="1" stop-color="#3a78e0"/></radialGradient></defs>
<circle cx="4.6" cy="4.8" r="3.9" fill="url(#gsp)" stroke="#2a62d0" stroke-width="0.9"/>
<circle cx="12.6" cy="10" r="3.9" fill="url(#gsp)" stroke="#2a62d0" stroke-width="0.9"/>
<circle cx="9.6" cy="12.6" r="3.9" fill="url(#gsp)" stroke="#2a62d0" stroke-width="0.9"/>
<path d="M8.6 1.4C11 0.8 12.6 2 13.2 4" stroke="#111" stroke-width="1" fill="none"/>
<path d="M11.6 3.8L14.8 1.8L14.4 5.6Z" fill="#111"/>
</svg>
<!-- layers -->
<svg class="abs" style="left:676px;top:54px" width="16" height="15" viewBox="0 0 16 15">
<path d="M0.8 9.6L3 12.8H12.8L14.6 9.6" fill="#fff" stroke="#1b52cc" stroke-width="1"/>
<path d="M0.8 6.6L3 9.6H12.8L14.6 6.6" fill="#fff" stroke="#1b52cc" stroke-width="1"/>
<path d="M2.6 0.4H12.4L15.4 4.2H0.2Z" fill="#4cb850" stroke="#1c7a28" stroke-width="0.7"/>
<path d="M0.2 4.2H15.4L13.6 6H2.2Z" fill="#1c7a28"/>
<rect x="7.6" y="7" width="8" height="7.6" fill="#f4f4f4"/>
<path d="M10.4 7.4H12.8V9.4H15V11.8H12.8V14H10.4V11.8H8.2V9.4H10.4Z" fill="#2ea83a" stroke="#156a20" stroke-width="0.6"/>
</svg>
<div class="gl" style="left:611px;top:77px">工具</div>
</div>
<div id="doctabs">
<div class="abs" style="left:0;top:0;width:3px;height:27px;background:#000"></div>
<div class="abs" style="left:7px;top:4px;width:86px;height:23px;border:1px solid #7e7e7e;border-bottom:none;border-radius:3px 3px 0 0;background:linear-gradient(#cfcfcf,#c6c6c6);box-shadow:inset 1px 1px 0 #e0e0e0,inset -1px 0 0 #dcdcdc,1px 0 0 #b4b4b4"></div>
<div class="abs" style="left:15px;top:9px;font-size:11px;line-height:14px;color:#141428;white-space:nowrap">New1.dxf</div>
<div class="abs" style="left:71px;top:7px;width:18px;height:18px;border:1px solid #767676;border-radius:4px;background:linear-gradient(#9b9b9b,#898989);box-shadow:0 0 0 1px rgba(235,235,235,.45)"></div>
<svg class="abs" style="left:74px;top:10px" width="11" height="11" viewBox="0 0 11 11"><path d="M1.9 1.9L9.1 9.1M9.1 1.9L1.9 9.1" stroke="#80702c" stroke-width="3.4" stroke-linecap="butt"/><path d="M2.3 2.3L8.7 8.7M8.7 2.3L2.3 8.7" stroke="#fff" stroke-width="2.1" stroke-linecap="butt"/></svg>
</div>
<div id="left">
<div class="abs" style="left:0;top:0;width:253px;height:1px;background:#fff"></div>
<div class="phead" style="top:2px">属性</div>
<svg class="abs" style="left:235px;top:6px" width="7" height="9" viewBox="0 0 7 9" shape-rendering="crispEdges"><rect x="2" y="1" width="2" height="4" fill="#eceef2"/><path d="M1 0H6V1H1ZM1 1H2V5H1ZM4 1H6V5H4ZM0 5H7V6H0ZM3 6H4V9H3Z" fill="#000"/></svg>
<div class="abs" style="left:1px;top:20px;width:248px;height:21px;border:1px solid #8a8a8a;border-radius:3px;background:linear-gradient(#f6f6f6,#ececec 45%,#dcdcdc 55%,#cecece);box-shadow:inset 0 0 0 1px #fbfbfb;font-size:12px;line-height:21px;padding-left:4px;color:#000">插入</div>
<svg class="abs" style="left:237px;top:29px" width="8" height="5" viewBox="0 0 8 5"><path d="M0 0H8L4 4.6Z" fill="#111"/></svg>
<div class="abs" style="left:0;top:41px;width:231px;height:129px;background:#ababab"></div>
<div class="abs" style="left:231px;top:41px;width:17px;height:129px;background:#f0f0f0"></div>
<div class="abs" style="left:138px;top:43px;width:1px;height:127px;background:#f4f4f4"></div>
<div class="abs pg" style="left:38px;top:46px;width:14px;text-align:center">Y</div><div class="abs pg" style="left:140px;top:46px">0</div><div class="abs" style="left:1px;top:64px;width:230px;height:1px;background:repeating-linear-gradient(90deg,#868686 0,#868686 3px,transparent 3px,transparent 6px)"></div><div class="abs pg" style="left:38px;top:67px;width:14px;text-align:center">Z</div><div class="abs pg" style="left:140px;top:67px">0</div><div class="abs" style="left:1px;top:85px;width:230px;height:1px;background:repeating-linear-gradient(90deg,#868686 0,#868686 3px,transparent 3px,transparent 6px)"></div><div class="abs" style="left:7px;top:90px;width:11px;height:11px;border:1px solid #000;box-shadow:inset 0 0 0 0.5px #000;background:#fff"></div><div class="abs" style="left:9px;top:95px;width:7px;height:1px;background:#000"></div><div class="abs pg" style="left:22px;top:88px;font-size:12px">比例</div><div class="abs" style="left:1px;top:106px;width:230px;height:1px;background:repeating-linear-gradient(90deg,#868686 0,#868686 3px,transparent 3px,transparent 6px)"></div><div class="abs pg" style="left:38px;top:109px;width:14px;text-align:center">X</div><div class="abs pg" style="left:140px;top:109px">1</div><div class="abs" style="left:1px;top:127px;width:230px;height:1px;background:repeating-linear-gradient(90deg,#868686 0,#868686 3px,transparent 3px,transparent 6px)"></div><div class="abs pg" style="left:38px;top:130px;width:14px;text-align:center">Y</div><div class="abs pg" style="left:140px;top:130px">1</div><div class="abs" style="left:1px;top:148px;width:230px;height:1px;background:repeating-linear-gradient(90deg,#868686 0,#868686 3px,transparent 3px,transparent 6px)"></div><div class="abs pg" style="left:38px;top:151px;width:14px;text-align:center">Z</div><div class="abs pg" style="left:140px;top:151px">1</div><div class="abs" style="left:1px;top:169px;width:230px;height:1px;background:repeating-linear-gradient(90deg,#868686 0,#868686 3px,transparent 3px,transparent 6px)"></div>
<svg class="abs" style="left:237px;top:50px" width="7" height="4" viewBox="0 0 7 4"><path d="M0 4L3.5 0.2L7 4Z" fill="#505050"/></svg>
<div class="abs" style="left:232px;top:138px;width:15px;height:15px;border:1px solid #959595;border-radius:2px;background:linear-gradient(90deg,#f4f4f4,#e0e0e0 50%,#bcbcbc)"></div>
<svg class="abs" style="left:237px;top:161px" width="7" height="4" viewBox="0 0 7 4"><path d="M0 0H7L3.5 3.8Z" fill="#505050"/></svg>
<div class="phead" style="top:179px;height:15px;line-height:15px">收藏夹</div>
<svg class="abs" style="left:219px;top:183px" width="7" height="9" viewBox="0 0 7 9" shape-rendering="crispEdges"><rect x="2" y="1" width="2" height="4" fill="#eceef2"/><path d="M1 0H6V1H1ZM1 1H2V5H1ZM4 1H6V5H4ZM0 5H7V6H0ZM3 6H4V9H3Z" fill="#000"/></svg>
<div class="abs" style="left:0;top:195px;width:250px;height:140px;border:1px solid #8a8e96;background:#fff"></div>
<div class="abs" style="left:1px;top:196px;width:248px;height:24px;background:linear-gradient(#fff,#fff 45%,#f3f3f3 55%,#f6f6f6);border-bottom:1px solid #d5d5d5"></div>
<div class="abs" style="left:124px;top:197px;width:1px;height:22px;background:#e2e2e2"></div>
<div class="abs" style="left:8px;top:201px;font-size:12px;line-height:14px;color:#000">名称</div>
<div class="abs" style="left:131px;top:201px;font-size:12px;line-height:14px;color:#000">路径</div>
</div>
<div id="canvas">
<svg class="abs" style="left:0;top:0" width="443" height="328" viewBox="256 172 443 328" shape-rendering="crispEdges">
<ellipse cx="469.5" cy="336" rx="94" ry="93.5" fill="none" stroke="#fff" stroke-width="1"/>
<ellipse cx="469" cy="336" rx="62.5" ry="62.5" fill="none" stroke="#fff" stroke-width="1"/>
<rect x="313.5" y="312.5" width="156" height="47" fill="none" stroke="#fff" stroke-width="1" stroke-dasharray="3 3"/>
<path d="M315.5 358.5L468.5 313M391.5 335.5H466M391.5 312.5V335.5" stroke="#fff" stroke-width="1" fill="none"/>
<rect x="464.5" y="330.5" width="10" height="10" fill="#ffff00" stroke="#0000f0" stroke-width="1"/>
</svg>
</div>
</div>
</body>
</html>
